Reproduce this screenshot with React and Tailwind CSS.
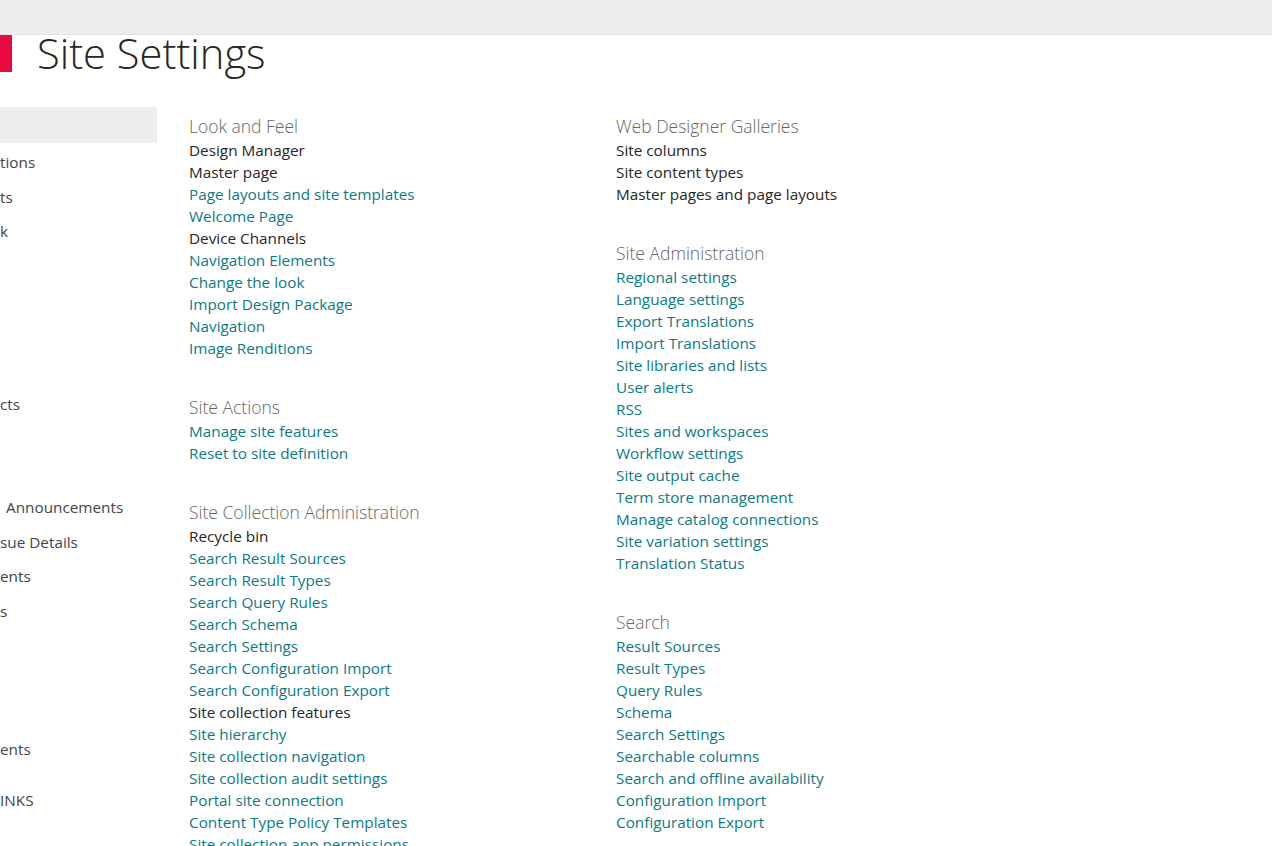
import React from "react";

const font = { fontFamily: '"Open Sans", "Noto Sans", "Liberation Sans", sans-serif' };

const navItems = [
	"tions",
	"ts",
	"k",
	"",
	"",
	"",
	"",
	"cts",
	"",
	"",
	"Announcements",
	"sue Details",
	"ents",
	"s",
	"",
	"",
	"",
	"ents",
];

const leftSections = [
	{
		title: "Look and Feel",
		links: [
			["Design Manager", true],
			["Master page", true],
			["Page layouts and site templates"],
			["Welcome Page"],
			["Device Channels", true],
			["Navigation Elements"],
			["Change the look"],
			["Import Design Package"],
			["Navigation"],
			["Image Renditions"],
		],
	},
	{
		title: "Site Actions",
		links: [["Manage site features"], ["Reset to site definition"]],
	},
	{
		title: "Site Collection Administration",
		links: [
			["Recycle bin", true],
			["Search Result Sources"],
			["Search Result Types"],
			["Search Query Rules"],
			["Search Schema"],
			["Search Settings"],
			["Search Configuration Import"],
			["Search Configuration Export"],
			["Site collection features", true],
			["Site hierarchy"],
			["Site collection navigation"],
			["Site collection audit settings"],
			["Portal site connection"],
			["Content Type Policy Templates"],
			["Site collection app permissions"],
		],
	},
];

const rightSections = [
	{
		title: "Web Designer Galleries",
		links: [["Site columns", true], ["Site content types", true], ["Master pages and page layouts", true]],
	},
	{
		title: "Site Administration",
		links: [
			["Regional settings"],
			["Language settings"],
			["Export Translations"],
			["Import Translations"],
			["Site libraries and lists"],
			["User alerts"],
			["RSS"],
			["Sites and workspaces"],
			["Workflow settings"],
			["Site output cache"],
			["Term store management"],
			["Manage catalog connections"],
			["Site variation settings"],
			["Translation Status"],
		],
	},
	{
		title: "Search",
		links: [
			["Result Sources"],
			["Result Types"],
			["Query Rules"],
			["Schema"],
			["Search Settings"],
			["Searchable columns"],
			["Search and offline availability"],
			["Configuration Import"],
			["Configuration Export"],
		],
	},
];

function Section({ title, links }) {
	return (
		<div className="mb-[35px]">
			<h2 className="text-[17.5px] font-light leading-[26px] text-[#666666]">{title}</h2>
			<ul>
				{links.map(([label, dark]) => (
					<li key={label} className="whitespace-nowrap text-[15.3px] leading-[22px]">
						<a className={dark ? "text-[#262626]" : "text-[#0c7a85]"}>{label}</a>
					</li>
				))}
			</ul>
		</div>
	);
}

export default function App() {
	return (
		<div className="h-[846px] overflow-hidden bg-white" style={font}>
			<div className="h-[35px] border-b border-[#e1e1e1] bg-[#eeeeee]" />

			{/* Title */}
			<div className="flex h-[37px] items-start">
				<div className="h-[37px] w-[12px] bg-[#ea0a40]" />
				<h1 className="ml-[25px] -mt-[9px] text-[41.7px] font-light leading-[54px] text-[#262626] whitespace-nowrap">Site Settings</h1>
			</div>

			<div className="mt-[35px] flex">
				{/* Left nav */}
				<div className="w-[157px] shrink-0">
					<div className="h-[36px] bg-[#eeeeee]" />
					<ul className="mt-[2px]">
						{navItems.map((item, i) => (
							<li key={i} className="h-[34.5px] whitespace-nowrap text-[15.3px] leading-[34.5px] text-[#444444]">
								{item === "Announcements" ? <span className="pl-[6px]">{item}</span> : item}
							</li>
						))}
					</ul>
					<div className="mt-[17px] text-[15.3px] leading-[34.5px] text-[#444444]">INKS</div>
				</div>

				{/* Settings columns */}
				<div className="ml-[32px] flex pt-[6px]">
					<div className="w-[427px]">
						{leftSections.map((s) => (
							<Section key={s.title} {...s} />
						))}
					</div>
					<div className="w-[400px]">
						{rightSections.map((s) => (
							<Section key={s.title} {...s} />
						))}
					</div>
				</div>
			</div>
		</div>
	);
}
